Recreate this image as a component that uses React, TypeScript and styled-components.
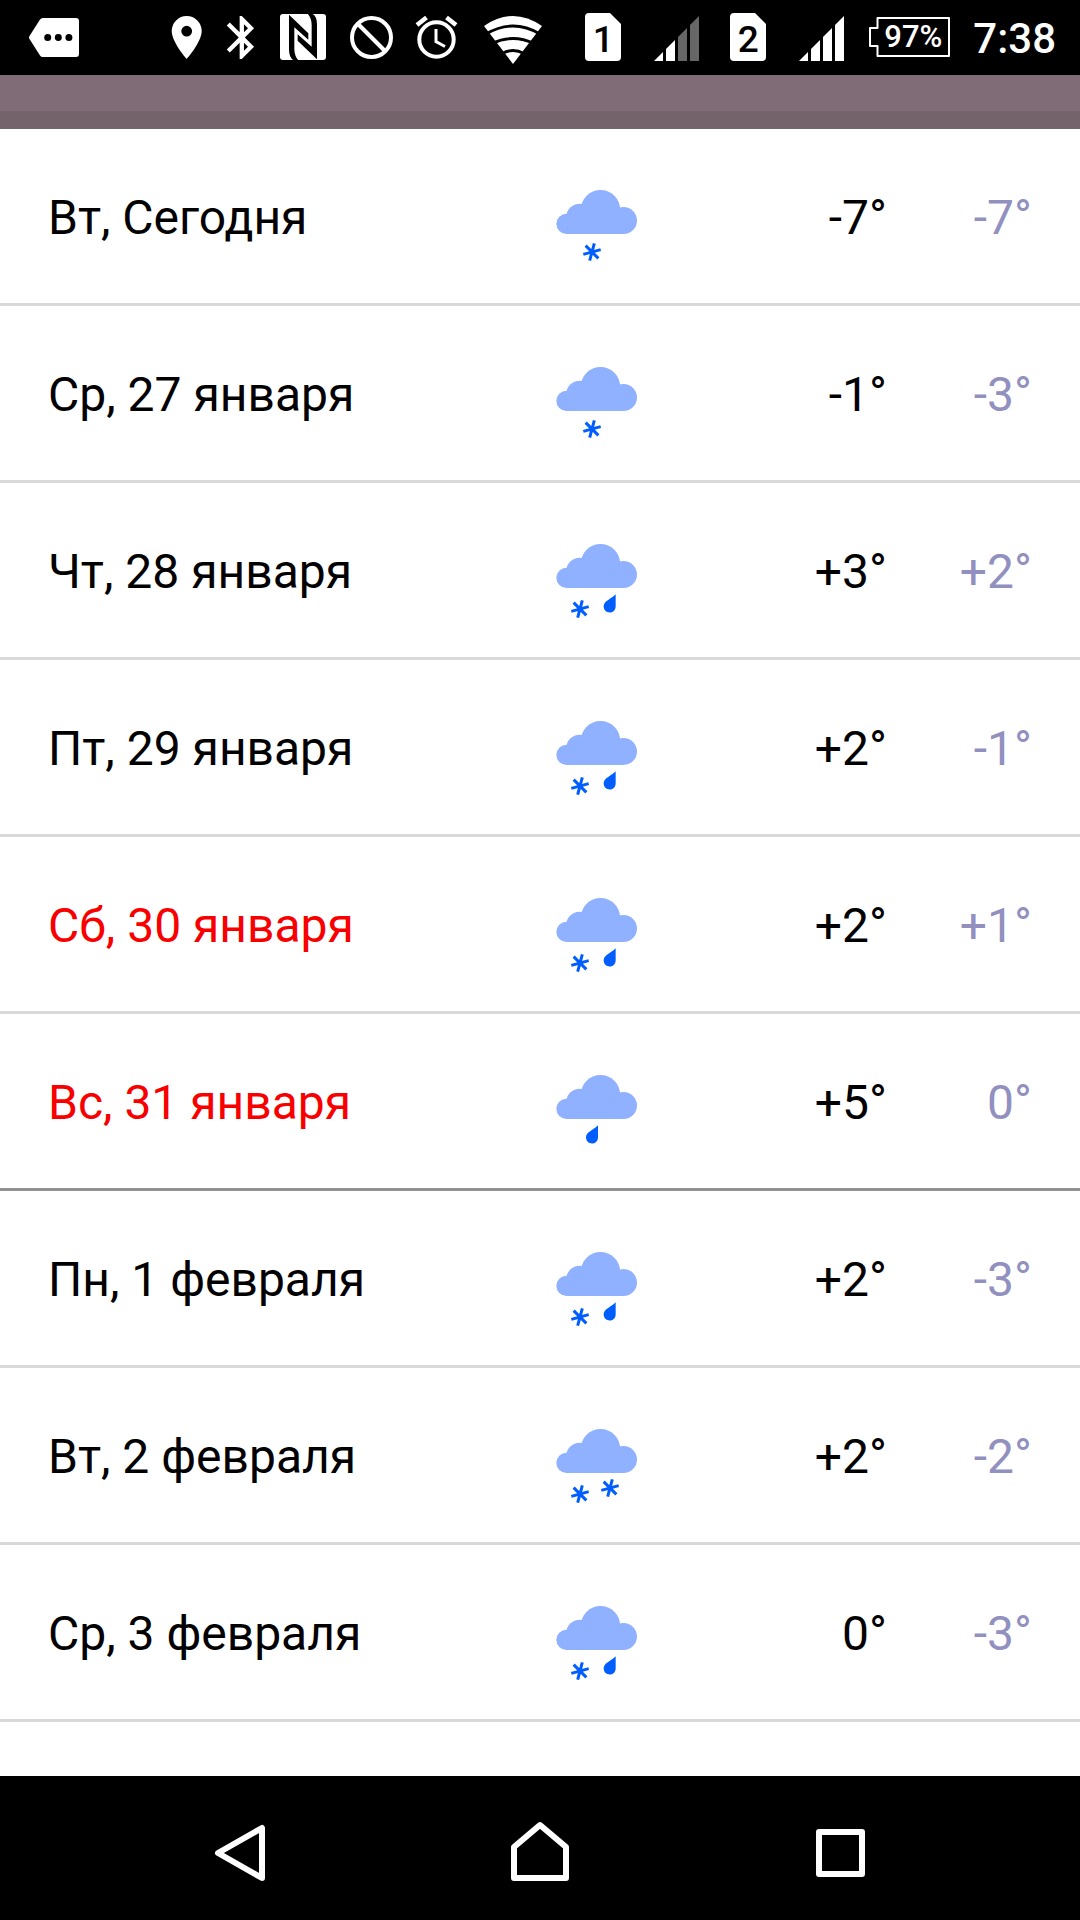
import React from 'react';
import styled, { createGlobalStyle } from 'styled-components';

const GlobalStyle = createGlobalStyle`
  * { box-sizing: border-box; }
  body {
    margin: 0;
    background: #fff;
    font-family: Roboto, "Noto Sans", sans-serif;
  }
`;

const Screen = styled.div`
  min-height: 100vh;
  display: flex;
  flex-direction: column;
  background: #fff;
`;

const StatusBar = styled.header`
  display: flex;
  align-items: center;
  justify-content: space-between;
  height: 75px;
  padding: 0 24px 1px 29px;
  background: #000;
  color: #fff;
`;

const StatusGroup = styled.div`
  display: flex;
  align-items: center;
  gap: 20px;
`;

const Glyph = styled.svg`
  display: block;
  flex: none;
`;

const Stack = styled.span`
  display: grid;
  align-items: center;
  & > * { grid-area: 1 / 1; }
`;

const SimNumber = styled.span`
  width: 42px;
  padding-top: 6px;
  text-align: center;
  color: #000;
  font-size: 37px;
  line-height: 40px;
  font-weight: 500;
`;

const BatteryLevel = styled.span`
  padding-left: 15px;
  font-size: 31px;
  line-height: 36px;
  font-weight: 500;
`;

const Clock = styled.time`
  font-size: 42px;
  line-height: 48px;
  font-weight: 500;
  padding-top: 4px;
`;

const AppBar = styled.div`
  height: 54px;
  background: #7f6c77;
  border-bottom: 18px solid #74636b;
`;

const Forecast = styled.main`
  flex: 1;
`;

const Days = styled.ul`
  margin: 0;
  padding: 0;
  list-style: none;
`;

const Day = styled.li<{ $monthEnd?: boolean }>`
  display: grid;
  grid-template-columns: 1fr 84px 248px 145px;
  align-items: center;
  height: 177px;
  padding: 0 48px;
  border-bottom: 3px solid ${(p) => (p.$monthEnd ? '#919191' : '#d9d9d9')};
  font-size: 48px;
  line-height: 56px;
`;

const DayName = styled.span<{ $weekend?: boolean }>`
  padding-top: 4px;
  color: ${(p) => (p.$weekend ? '#f80000' : '#000')};
`;

const Temp = styled.span<{ $night?: boolean }>`
  padding-top: 4px;
  text-align: right;
  color: ${(p) => (p.$night ? '#9190bf' : '#000')};
`;

const NavBar = styled.nav`
  display: flex;
  align-items: center;
  justify-content: center;
  gap: 156px;
  height: 144px;
  background: #000;
`;

const NavButton = styled.button`
  display: grid;
  place-items: center;
  width: 144px;
  height: 144px;
  padding: 0;
  border: 0;
  background: none;
  color: #fff;
`;

type IconProps = { x: number; w: number; children: React.ReactNode };

const StatusIcon = ({ x, w, children }: IconProps) => (
  <Glyph width={w} height={54} viewBox={`${x} 10 ${w} 54`} fill="#fff" aria-hidden="true">
    {children}
  </Glyph>
);

const Sim = ({ n, w }: { n: number; w: number }) => (
  <Stack>
    <StatusIcon x={0} w={w}>
      <path d="M7 13H28L39 24V57a4 4 0 0 1-4 4H7a4 4 0 0 1-4-4V17a4 4 0 0 1 4-4z" />
    </StatusIcon>
    <SimNumber>{n}</SimNumber>
  </Stack>
);

const Signal = ({ bars, w }: { bars: number; w: number }) => (
  <StatusIcon x={0} w={w}>
    <path d="M2 61L11 52V61z" />
    <path d="M14 49L23 40V61H14z" />
    <path d="M26 37L35 28V61H26z" fill={bars > 2 ? '#fff' : '#666'} />
    <path d="M38 25L47 16V61H38z" fill={bars > 3 ? '#fff' : '#666'} />
  </StatusIcon>
);

const Snow = ({ x, y }: { x: number; y: number }) => (
  <g transform={`translate(${x} ${y}) rotate(-15)`} stroke="#005eff" strokeWidth="9">
    <path d="M-27 0H27M-13.5 -23.4L13.5 23.4M-13.5 23.4L13.5 -23.4" />
  </g>
);

const Drop = ({ x, y }: { x: number; y: number }) => (
  <path
    transform={`translate(${x} ${y})`}
    fill="#005eff"
    d="M18 -36V0A18 18 0 1 1 -13 -12C-8 -17 5 -24 18 -36z"
  />
);

type Weather = 'snow' | 'sleet' | 'rain' | 'heavySnow';

const labels: Record<Weather, string> = {
  snow: 'Небольшой снег',
  sleet: 'Снег с дождём',
  rain: 'Небольшой дождь',
  heavySnow: 'Снег',
};

const WeatherIcon = ({ kind }: { kind: Weather }) => (
  <Glyph width={84} height={96} viewBox="75 -6 252 288" role="img" aria-label={labels[kind]}>
    <g fill="#8fb1ff">
      <circle cx="109.500" cy="161.500" r="30.500" />
      <circle cx="149" cy="141" r="40" />
      <circle cx="211.500" cy="119" r="59" />
      <circle cx="280.500" cy="151.500" r="40.500" />
      <rect x="109.500" y="140" width="171" height="52" />
    </g>
    {kind === 'snow' && <Snow x={186} y={246} />}
    {kind === 'rain' && <Drop x={186} y={247} />}
    {(kind === 'sleet' || kind === 'heavySnow') && <Snow x={150} y={255} />}
    {kind === 'sleet' && <Drop x={239} y={247} />}
    {kind === 'heavySnow' && <Snow x={240} y={237} />}
  </Glyph>
);

type DayData = {
  name: string;
  kind: Weather;
  day: string;
  night: string;
  weekend?: boolean;
  monthEnd?: boolean;
};

const days: DayData[] = [
  { name: 'Вт, Сегодня', kind: 'snow', day: '-7°', night: '-7°' },
  { name: 'Ср, 27 января', kind: 'snow', day: '-1°', night: '-3°' },
  { name: 'Чт, 28 января', kind: 'sleet', day: '+3°', night: '+2°' },
  { name: 'Пт, 29 января', kind: 'sleet', day: '+2°', night: '-1°' },
  { name: 'Сб, 30 января', kind: 'sleet', day: '+2°', night: '+1°', weekend: true },
  { name: 'Вс, 31 января', kind: 'rain', day: '+5°', night: '0°', weekend: true, monthEnd: true },
  { name: 'Пн, 1 февраля', kind: 'sleet', day: '+2°', night: '-3°' },
  { name: 'Вт, 2 февраля', kind: 'heavySnow', day: '+2°', night: '-2°' },
  { name: 'Ср, 3 февраля', kind: 'sleet', day: '0°', night: '-3°' },
];

export default function App() {
  return (
    <Screen>
      <GlobalStyle />
      <StatusBar>
        <StatusIcon x={29} w={50}>
          <path
            fillRule="evenodd"
            d="M43 18H76a3 3 0 0 1 3 3V54a3 3 0 0 1-3 3H43q-2 0-3-1.500L29.500 39q-1-1.500 0-3L40 19.500Q41 18 43 18zM44.200 37.500a3.500 3.500 0 1 0 7 0a3.500 3.500 0 1 0-7 0zM54.800 37.500a3.500 3.500 0 1 0 7 0a3.500 3.500 0 1 0-7 0zM65.400 37.500a3.500 3.500 0 1 0 7 0a3.500 3.500 0 1 0-7 0z"
          />
        </StatusIcon>
        <StatusGroup>
          <StatusIcon x={170} w={36}>
            <path
              fillRule="evenodd"
              d="M186.700 16a15 15 0 0 1 15 15C201.700 42 186.700 59 186.700 59S171.700 42 171.700 31a15 15 0 0 1 15-15zM181.300 31.200a5.400 5.400 0 1 0 10.800 0a5.400 5.400 0 1 0-10.800 0z"
            />
          </StatusIcon>
          <StatusIcon x={226} w={33}>
            <path
              transform="translate(216 11.700) scale(2.150)"
              d="M17.710 7.710L12 2h-1v7.590L6.410 5 5 6.410 10.590 12 5 17.590 6.410 19 11 14.410V22h1l5.710-5.710-4.300-4.290 4.300-4.290zM13 5.830l1.880 1.880L13 9.590V5.830zm1.880 10.460L13 18.170v-3.760l1.880 1.880z"
            />
          </StatusIcon>
          <StatusIcon x={279} w={50}>
            <rect x="280" y="14" width="46" height="46" rx="3" />
            <g fill="#000" transform="translate(215 8) scale(.3333)">
              <path id="nfc-half" d="M222 20L280 76V95L238 58V122Q238 144 250 157H236Q222 150 222 124z" />
              <path transform="rotate(180 264 87)" d="M222 20L280 76V95L238 58V122Q238 144 250 157H236Q222 150 222 124z" />
            </g>
          </StatusIcon>
          <StatusIcon x={349} w={45}>
            <circle cx="371.500" cy="37.500" r="19.500" fill="none" stroke="#fff" strokeWidth="4" />
            <path d="M358 24L385 51" stroke="#fff" strokeWidth="4" />
          </StatusIcon>
          <StatusIcon x={414} w={48}>
            <g fill="none" stroke="#fff">
              <circle cx="436.500" cy="39.500" r="17.200" strokeWidth="4" />
              <path d="M417 25L426.500 17.500M456 25L446.500 17.500" strokeWidth="4.500" />
              <path d="M436 29V41.500L445 46.500" strokeWidth="3" />
            </g>
          </StatusIcon>
          <StatusIcon x={482} w={80}>
            <path d="M513 64L484 26Q513 6 542 26z" />
            <g fill="none" stroke="#000" strokeWidth="2.800">
              <path d="M486 34Q513 18 540 34" />
              <path d="M492 43.500Q513 33.500 534 43.500" />
              <path d="M502 53.500Q513 47.500 524 53.500" />
            </g>
          </StatusIcon>
          <Sim n={1} w={50} />
          <Signal bars={2} w={55} />
          <Sim n={2} w={50} />
          <Signal bars={4} w={52} />
          <Stack>
            <StatusIcon x={869} w={84}>
              <path fill="none" stroke="#fff" strokeWidth="2" strokeLinejoin="round" d="M877.500 18H949V56H877.500V46H870V28H877.500z" />
            </StatusIcon>
            <BatteryLevel>97%</BatteryLevel>
          </Stack>
          <Clock>7:38</Clock>
        </StatusGroup>
      </StatusBar>
      <AppBar />
      <Forecast>
        <Days>
          {days.map((d) => (
            <Day key={d.name} $monthEnd={d.monthEnd}>
              <DayName $weekend={d.weekend}>{d.name}</DayName>
              <WeatherIcon kind={d.kind} />
              <Temp>{d.day}</Temp>
              <Temp $night>{d.night}</Temp>
            </Day>
          ))}
        </Days>
      </Forecast>
      <NavBar>
        <NavButton aria-label="Назад">
          <Glyph width={60} height={72} viewBox="210 1812 60 72" fill="none" stroke="#fff" strokeWidth="6" strokeLinejoin="round">
            <path d="M262 1828V1878L218 1853z" />
          </Glyph>
        </NavButton>
        <NavButton aria-label="Домой">
          <Glyph width={60} height={72} viewBox="510 1812 60 72" fill="none" stroke="#fff" strokeWidth="6" strokeLinejoin="round">
            <path d="M540 1825L566 1847V1878H514V1847z" />
          </Glyph>
        </NavButton>
        <NavButton aria-label="Недавние приложения">
          <Glyph width={60} height={72} viewBox="810 1812 60 72" fill="none" stroke="#fff" strokeWidth="6" strokeLinejoin="round">
            <rect x="819" y="1832" width="43" height="42" />
          </Glyph>
        </NavButton>
      </NavBar>
    </Screen>
  );
}
